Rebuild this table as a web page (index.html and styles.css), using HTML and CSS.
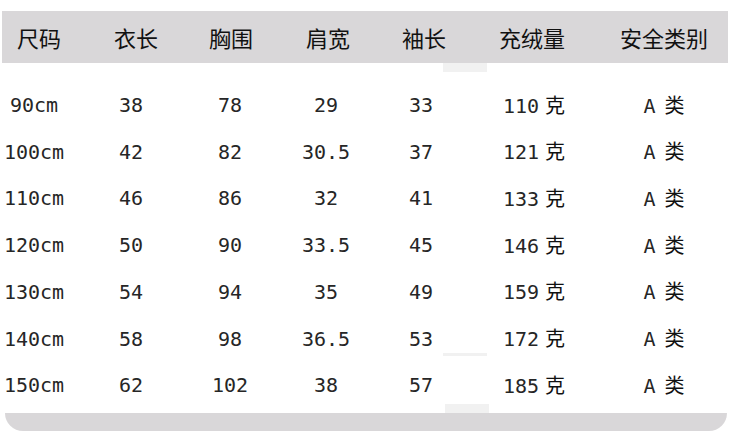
FILE: index.html
```html
<!DOCTYPE html>
<html lang="zh">
<head>
<meta charset="utf-8">
<link rel="stylesheet" href="styles.css">
</head>
<body>
<div class="sheet">
  <div class="head">
    <div>尺码</div><div>衣长</div><div>胸围</div><div>肩宽</div><div>袖长</div><div>充绒量</div><div>安全类别</div>
  </div>
  <div class="rows">
    <div class="row"><div>90cm</div><div>38</div><div>78</div><div>29</div><div>33</div><div>110<span class="u">克</span></div><div>A<span class="u2">类</span></div></div>
    <div class="row"><div>100cm</div><div>42</div><div>82</div><div>30.5</div><div>37</div><div>121<span class="u">克</span></div><div>A<span class="u2">类</span></div></div>
    <div class="row"><div>110cm</div><div>46</div><div>86</div><div>32</div><div>41</div><div>133<span class="u">克</span></div><div>A<span class="u2">类</span></div></div>
    <div class="row"><div>120cm</div><div>50</div><div>90</div><div>33.5</div><div>45</div><div>146<span class="u">克</span></div><div>A<span class="u2">类</span></div></div>
    <div class="row"><div>130cm</div><div>54</div><div>94</div><div>35</div><div>49</div><div>159<span class="u">克</span></div><div>A<span class="u2">类</span></div></div>
    <div class="row"><div>140cm</div><div>58</div><div>98</div><div>36.5</div><div>53</div><div>172<span class="u">克</span></div><div>A<span class="u2">类</span></div></div>
    <div class="row"><div>150cm</div><div>62</div><div>102</div><div>38</div><div>57</div><div>185<span class="u">克</span></div><div>A<span class="u2">类</span></div></div>
  </div>
  <div class="foot"></div>
  <div class="smudge s1"></div>
  <div class="smudge s2"></div>
  <div class="smudge s3"></div>
</div>
</body>
</html>
```
FILE: styles.css
```css
html, body {
  margin: 0;
  padding: 0;
  background: #ffffff;
}
.sheet {
  position: relative;
  width: 741px;
  height: 437px;
  padding-top: 11px;
  box-sizing: border-box;
  color: #111111;
  overflow: hidden;
}
.head {
  margin-left: 2px;
  width: 726px;
  height: 52px;
  background: #d9d7d9;
  display: grid;
  grid-template-columns: 74px 120px 70px 124px 68px 148px 116px;
  align-items: center;
  font-family: "Noto Sans CJK SC", sans-serif;
  font-size: 22px;
  line-height: 52px;
  text-align: center;
}
.rows {
  margin-top: 18.6px;
  font-family: "DejaVu Sans Mono", "Noto Sans CJK SC", monospace;
  font-size: 20px;
  color: #262626;
}
.row {
  display: grid;
  grid-template-columns: 68px 126px 72px 120px 70px 156px 104px;
  height: 46.7px;
  align-items: center;
  text-align: center;
  line-height: 46.7px;
}
.u {
  font-family: "Noto Sans CJK SC", sans-serif;
  margin-left: 6px;
  color: #111111;
}
.u2 {
  font-family: "Noto Sans CJK SC", sans-serif;
  margin-left: 9px;
  color: #111111;
}
.foot {
  margin-top: 4.4px;
  margin-left: 5px;
  width: 722px;
  height: 18px;
  background: #d9d7d9;
  border-radius: 0 0 18px 18px;
}
.smudge {
  position: absolute;
  background: #f1f1f1;
  width: 44px;
}
.s1 { left: 443px; top: 63px; height: 9px; }
.s2 { left: 443px; top: 353px; height: 3px; }
.s3 { left: 445px; top: 404px; height: 9px; }
```
